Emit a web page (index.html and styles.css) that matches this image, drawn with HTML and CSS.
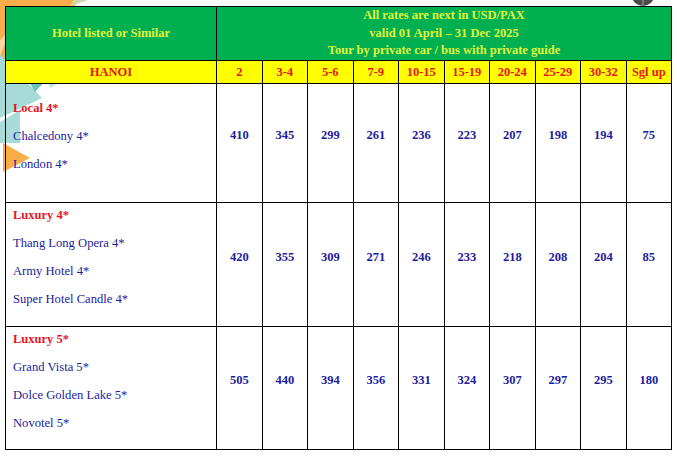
FILE: index.html
```html
<!DOCTYPE html>
<html>
<head>
<meta charset="utf-8">
<link rel="stylesheet" href="styles.css">
</head>
<body>
<div class="page">
  <svg class="deco" width="120" height="190" viewBox="0 0 120 190" aria-hidden="true">
    <polygon points="0,0 82,0 0,62" fill="#f6ad4a"/>
    <polygon points="74,0 88,0 70,6" fill="#c9d9a8"/>
    <polygon points="0,40 10,30 0,56" fill="#f9d6a0"/>
    <polygon points="0,54 42,98 0,118" fill="#a6dbd7"/>
    <polygon points="28,80 46,80 35,92" fill="#6cc3bc"/>
    <polygon points="48,80 62,80 50,88" fill="#b7e2de"/>
    <polygon points="0,122 20,110 20,143 0,143" fill="#a9dcd8"/>
    <polygon points="3,143 30,158 3,172" fill="#f7ae47"/>
  </svg>
  <svg class="knob" width="30" height="8" viewBox="0 0 30 8" aria-hidden="true">
    <ellipse cx="13" cy="-4" rx="11" ry="10" fill="#4b4b4b"/>
    <rect x="12" y="0" width="2" height="6" fill="#7a7a7a"/>
  </svg>
  <table class="rates">
    <colgroup>
      <col class="c-hotel">
      <col><col><col><col><col><col><col><col><col><col>
    </colgroup>
    <tr class="head">
      <th class="head-hotel">Hotel listed or Similar</th>
      <th class="head-rates" colspan="10">All rates are next in USD/PAX<br>valid 01 April – 31 Dec 2025<br>Tour by private car / bus with private guide</th>
    </tr>
    <tr class="sub">
      <th>HANOI</th>
      <th>2</th><th>3-4</th><th>5-6</th><th>7-9</th><th>10-15</th><th>15-19</th><th>20-24</th><th>25-29</th><th>30-32</th><th>Sgl up</th>
    </tr>
    <tr class="r1">
      <td class="hotels">
        <div class="cat">Local 4*</div>
        <div class="name">Chalcedony 4*</div>
        <div class="name">London 4*</div>
      </td>
      <td>410</td><td>345</td><td>299</td><td>261</td><td>236</td><td>223</td><td>207</td><td>198</td><td>194</td><td>75</td>
    </tr>
    <tr class="r2">
      <td class="hotels">
        <div class="cat">Luxury 4*</div>
        <div class="name">Thang Long Opera 4*</div>
        <div class="name">Army Hotel 4*</div>
        <div class="name">Super Hotel Candle 4*</div>
      </td>
      <td>420</td><td>355</td><td>309</td><td>271</td><td>246</td><td>233</td><td>218</td><td>208</td><td>204</td><td>85</td>
    </tr>
    <tr class="r3">
      <td class="hotels">
        <div class="cat">Luxury 5*</div>
        <div class="name">Grand Vista 5*</div>
        <div class="name">Dolce Golden Lake 5*</div>
        <div class="name">Novotel 5*</div>
      </td>
      <td>505</td><td>440</td><td>394</td><td>356</td><td>331</td><td>324</td><td>307</td><td>297</td><td>295</td><td>180</td>
    </tr>
  </table>
</div>
</body>
</html>
```

FILE: styles.css
```css
html, body {
  margin: 0;
  padding: 0;
  background: #ffffff;
}

.page {
  position: relative;
  width: 677px;
  height: 456px;
  overflow: hidden;
  padding-top: 6px;
  padding-left: 5px;
  box-sizing: border-box;
  font-family: "Liberation Serif", "Times New Roman", serif;
}

.deco {
  position: absolute;
  left: 0;
  top: 0;
  z-index: 0;
}

.knob {
  position: absolute;
  left: 630px;
  top: 0;
  z-index: 0;
}

.rates {
  position: relative;
  z-index: 1;
  border-collapse: collapse;
  table-layout: fixed;
  width: 667px;
  border: 1px solid #000;
}

.c-hotel {
  width: 211px;
}

.rates th,
.rates td {
  border: 1px solid #000;
  padding: 0;
  text-align: center;
  font-weight: bold;
}

.head th {
  background: #00b050;
  color: #e2f43e;
  font-size: 12.5px;
  line-height: 17.5px;
  height: 52px;
}

.sub th {
  background: #ffff00;
  color: #e8141c;
  font-size: 12.5px;
  height: 22px;
  line-height: 14px;
}

.rates td {
  color: #1c1c9e;
  font-size: 12.5px;
  vertical-align: middle;
  padding-bottom: 14px;
  background: transparent;
}

.r1 td { height: 104px; }
.r2 td { height: 109px; }
.r3 td { height: 108px; }

.rates td.hotels {
  text-align: left;
  padding-left: 7px;
}

.hotels div + div {
  margin-top: 8px;
}

.cat {
  color: #e8141c;
  font-weight: bold;
  font-size: 12.5px;
  line-height: 20px;
}

.name {
  color: #1c1c9e;
  font-weight: normal;
  font-size: 12.6px;
  line-height: 20px;
}
```
